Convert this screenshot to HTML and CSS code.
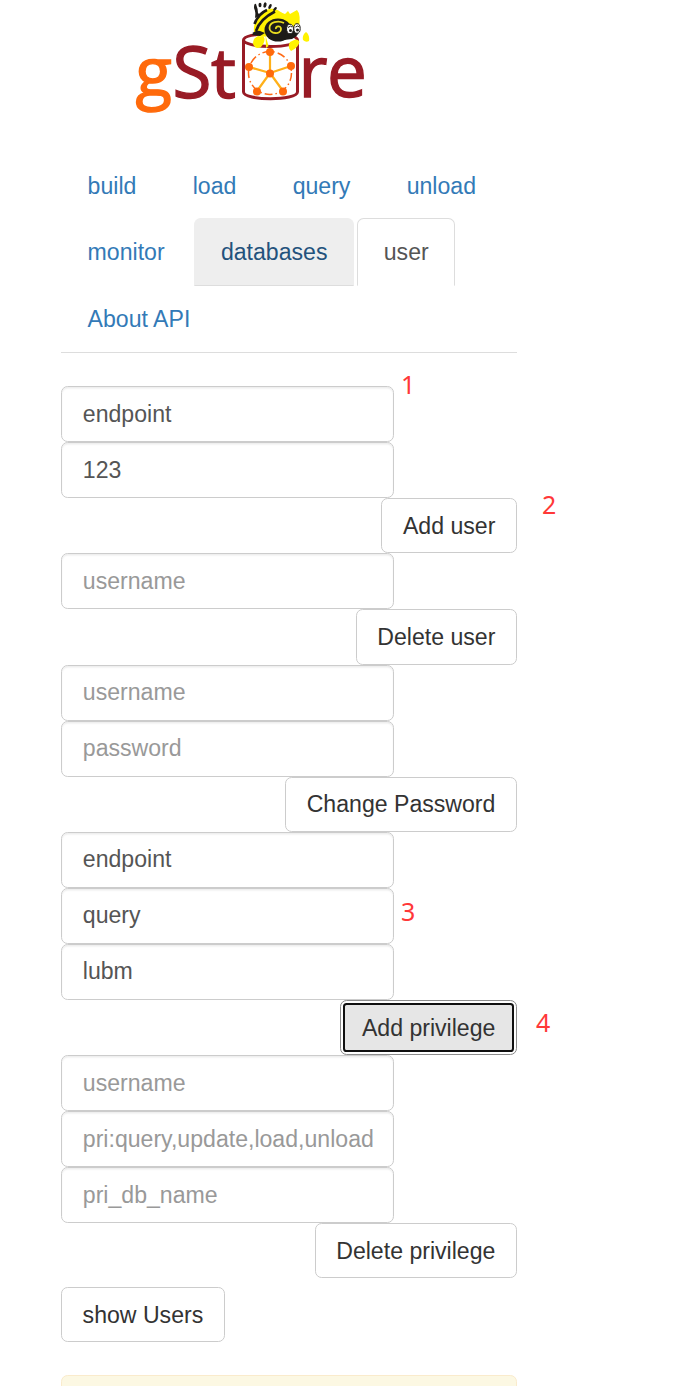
FILE: index.html
```html
<!DOCTYPE html>
<html lang="en">
<head>
<meta charset="utf-8">
<title>gStore</title>
<link rel="stylesheet" href="styles.css">
</head>
<body>
<main class="page">
  <header class="brand">
    <svg class="logo" width="240" height="120" viewBox="130 0 240 120" role="img" aria-label="gStore">
      <g class="wordmark">
        <text class="orange" x="135.500" y="96" font-size="67">g</text>
        <text x="172.500" y="97.500" font-size="71">S</text>
        <text x="211" y="97.500" font-size="70">t</text>
        <text x="298.500" y="96.500" font-size="71">r</text>
        <text x="327" y="96.500" font-size="71">e</text>
      </g>
      <g fill="none" stroke="#981b25" stroke-width="3">
        <ellipse cx="270.500" cy="40" rx="27" ry="6.500"/>
        <path d="M243.500 40V92C244 101 297 101 297.500 92V40"/>
      </g>
      <circle cx="270" cy="73" r="21.500" fill="none" stroke="#ff6a16" stroke-width="1.500" stroke-dasharray="8 3 1.500 3"/>
      <path d="M270 73V52M270 73L249 67M270 73L291 66M270 73L257 91M270 73L283 91" stroke="#ffb019" stroke-width="2.200"/>
      <g fill="#ff6a0b">
        <circle cx="270" cy="52" r="4"/><circle cx="249" cy="67" r="4"/><circle cx="291" cy="66" r="4"/>
        <circle cx="257" cy="91.500" r="4"/><circle cx="283" cy="91.500" r="4"/><circle cx="270" cy="73.500" r="4"/>
      </g>
      <g>
        <path d="M254 33C253 23 257 12 269 9C275 8 280 11 283 14L281 34L262 37Z" fill="#fff200"/>
        <path d="M254.500 24Q258 14 267 10M256 31Q260 19 275 11.500" fill="none" stroke="#1d1b18" stroke-width="2.600"/>
        <path d="M277 19L280 12L285 14L288 11L290 14L297 10Q301 14 299 28L296 33L280 32Z" fill="#fff200"/>
        <ellipse cx="278" cy="30" rx="13.500" ry="11.500" fill="#1d1b18"/>
        <path d="M286 31L299 30Q299 36 292 39L284 40Z" fill="#1d1b18"/>
        <path d="M276 29C275 26 281 25 281 29C281 35 269.500 34 269.500 28C269.500 22 278 20 284 23" fill="none" stroke="#eadd20" stroke-width="1.800"/>
        <path d="M252 35Q254 30 260 31L265 33L260 36Z" fill="#1d1b18"/>
        <path d="M258 36Q253 38 253 44Q255 50 261 47Q266 41 264 37ZM265.500 35L268.500 46L266 48ZM290 42Q298 37 299.500 42Q298 48 291 51Q287 47 290 42ZM306 32Q310 35 309 41Q306 43 303 40Q302 35 306 32Z" fill="#fff200"/>
        <g fill="#1d1b18">
          <path d="M254 8Q254 3 256 4Q258 9 258 13L260 15L255 18Q256 12 254 8Z"/>
          <ellipse cx="260" cy="5" rx="1.500" ry="2.300"/><ellipse cx="265" cy="5" rx="1.500" ry="2.700" transform="rotate(15 265 5)"/>
          <ellipse cx="270" cy="6.500" rx="1.400" ry="2.700" transform="rotate(25 270 6.500)"/><ellipse cx="275" cy="9" rx="1.300" ry="2.400" transform="rotate(40 275 9)"/>
        </g>
        <g fill="#fff" stroke="#1d1b18" stroke-width="1"><ellipse cx="290" cy="29" rx="3.500" ry="4.800"/><ellipse cx="297" cy="28.500" rx="3.200" ry="4.800"/></g>
        <path d="M288 27.500Q291 25 292 27M295.500 27Q298 25 299.500 27" fill="none" stroke="#1d1b18"/>
        <circle cx="290.500" cy="30.500" r="1.500" fill="#1d1b18"/><circle cx="297.500" cy="30" r="1.500" fill="#1d1b18"/>
      </g>
    </svg>
  </header>
  <nav class="tabs">
    <a class="tab">build</a><a class="tab">load</a><a class="tab">query</a><a class="tab">unload</a>
    <a class="tab">monitor</a><a class="tab tab-hover">databases</a><a class="tab tab-active">user</a>
    <a class="tab">About API</a>
  </nav>
  <form class="form">
    <input class="field" value="endpoint">
    <input class="field" value="123">
    <button class="btn" type="button">Add user</button>
    <input class="field" placeholder="username">
    <button class="btn" type="button">Delete user</button>
    <input class="field" placeholder="username">
    <input class="field" placeholder="password">
    <button class="btn" type="button">Change Password</button>
    <input class="field" value="endpoint">
    <input class="field" value="query">
    <input class="field" value="lubm">
    <button class="btn btn-focus" type="button">Add privilege</button>
    <input class="field" placeholder="username">
    <input class="field" placeholder="pri:query,update,load,unload">
    <input class="field" placeholder="pri_db_name">
    <button class="btn" type="button">Delete privilege</button>
    <button class="btn btn-show" type="button">show Users</button>
  </form>
  <div class="alert"></div>
  <span class="note note-1">1</span>
  <span class="note note-2">2</span>
  <span class="note note-3">3</span>
  <span class="note note-4">4</span>
</main>
</body>
</html>
```

FILE: styles.css
```css
* { box-sizing: border-box; }
html { overflow: hidden; }
body {
  margin: 0;
  background: #fff;
  color: #333;
  font: 23.1px/33px "Liberation Sans", Arial, sans-serif;
}
.page {
  position: relative;
  height: 1386px;
  padding: 0 170px 0 61px;
  overflow: hidden;
}
.brand { height: 151.6px; padding-left: 69px; }
.logo { display: block; }
.wordmark {
  fill: #981b25;
  font-family: "Open Sans", sans-serif;
  font-weight: 500;
  stroke: #981b25;
  stroke-width: 1.4px;
}
.orange { fill: #ff6a0b; stroke: #ff6a0b; }

.tabs {
  display: flex;
  flex-wrap: wrap;
  height: 201.4px;
  border-bottom: 1px solid #ddd;
}
.tab {
  height: 67.5px;
  margin: 0 3.1px -1px 0;
  padding: 17px 25.6px 16px;
  border: 1px solid transparent;
  border-radius: 6.6px 6.6px 0 0;
  color: #337ab7;
}
.tab-hover {
  background: #eee;
  border-color: #eee #eee #ddd;
  color: #23527c;
}
.tab-active {
  background: #fff;
  border-color: #ddd #ddd transparent;
  color: #555;
}

.form {
  display: flex;
  flex-direction: column;
  align-items: flex-start;
  padding-top: 33.1px;
}
.field, .btn {
  margin: 0;
  padding: 0 20.8px;
  border: 1px solid #ccc;
  border-radius: 6.6px;
  background: #fff;
  font: inherit;
}
.field {
  width: 333px;
  height: 56.05px;
  padding-right: 18px;
  color: #555;
  box-shadow: inset 0 1.6px 1.6px rgba(0, 0, 0, .075);
}
.field::placeholder { color: #999; opacity: 1; }
.btn {
  align-self: flex-end;
  height: 55.15px;
  padding: 1.4px 20.6px 0;
  color: #333;
  white-space: nowrap;
}
.btn-focus {
  border-color: #8c8c8c;
  background: #e6e6e6;
  outline: 2px solid #101010;
  outline-offset: -5px;
  box-shadow: inset 0 0 0 2px #fff;
}
.btn-show { align-self: flex-start; margin-top: 9px; }

.alert {
  height: 60px;
  margin-top: 33px;
  border: 1px solid #faebcc;
  border-radius: 6.6px;
  background: #fcf8e3;
}

.note {
  position: absolute;
  color: #ff3838;
  font: 25px/30px "Noto Sans", sans-serif;
}
.note-1 { left: 401px; top: 369px; }
.note-2 { left: 542px; top: 489px; }
.note-3 { left: 401px; top: 896px; }
.note-4 { left: 536px; top: 1007px; }
```
